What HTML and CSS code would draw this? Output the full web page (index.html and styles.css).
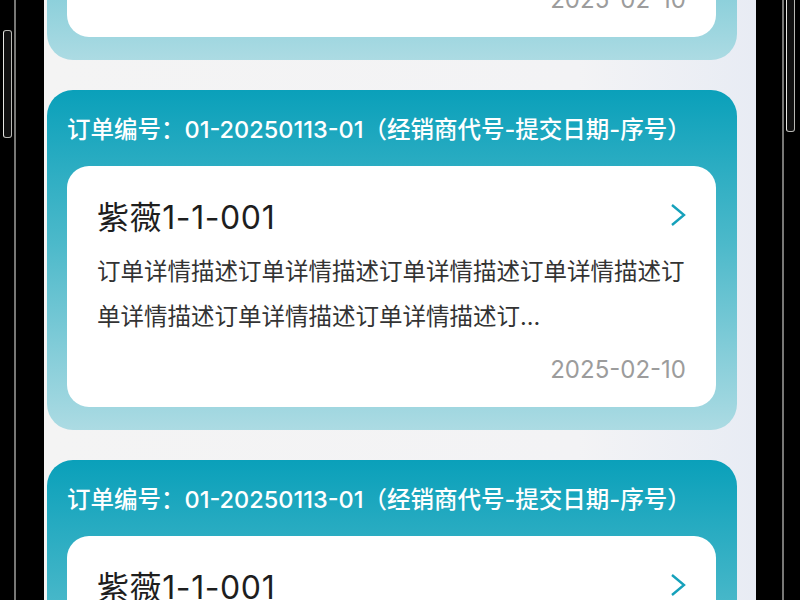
FILE: index.html
```html
<!DOCTYPE html>
<html lang="zh-CN">
<head>
    <meta charset="UTF-8">
    <meta name="viewport" content="width=device-width, initial-scale=1.0">
    <title>订单列表</title>
    <link rel="stylesheet" href="styles.css">
</head>
<body>

    <div class="phone">
        <div class="bezel bezel-left">
            <div class="side-btn"></div>
            <div class="edge-line"></div>
        </div>

        <div class="screen">
            <div class="order-list">
                <div class="order-card">
                    <div class="order-no">订单编号：01-20250113-01（经销商代号-提交日期-序号）</div>
                    <div class="order-body">
                        <div class="order-head">
                            <span class="order-name">紫薇1-1-001</span>
                            <svg class="chevron" viewBox="0 0 16 24"><path d="M2 2 L14 12 L2 22"/></svg>
                        </div>
                        <p class="order-desc">订单详情描述订单详情描述订单详情描述订单详情描述订单详情描述订单详情描述订单详情描述订...</p>
                        <div class="order-date">2025-02-10</div>
                    </div>
                </div>

                <div class="order-card">
                    <div class="order-no">订单编号：01-20250113-01（经销商代号-提交日期-序号）</div>
                    <div class="order-body">
                        <div class="order-head">
                            <span class="order-name">紫薇1-1-001</span>
                            <svg class="chevron" viewBox="0 0 16 24"><path d="M2 2 L14 12 L2 22"/></svg>
                        </div>
                        <p class="order-desc">订单详情描述订单详情描述订单详情描述订单详情描述订单详情描述订单详情描述订单详情描述订...</p>
                        <div class="order-date">2025-02-10</div>
                    </div>
                </div>

                <div class="order-card">
                    <div class="order-no">订单编号：01-20250113-01（经销商代号-提交日期-序号）</div>
                    <div class="order-body">
                        <div class="order-head">
                            <span class="order-name">紫薇1-1-001</span>
                            <svg class="chevron" viewBox="0 0 16 24"><path d="M2 2 L14 12 L2 22"/></svg>
                        </div>
                        <p class="order-desc">订单详情描述订单详情描述订单详情描述订单详情描述订单详情描述订单详情描述订单详情描述订...</p>
                        <div class="order-date">2025-02-10</div>
                    </div>
                </div>
            </div>
        </div>

        <div class="bezel bezel-right">
            <div class="edge-line"></div>
            <div class="side-btn"></div>
        </div>
    </div>

</body>
</html>
```

FILE: styles.css
```css
body {
    margin: 0;
    background: #000;
    font-family: Inter, "Noto Sans CJK SC", sans-serif;
    overflow: hidden;
}
.phone {
    display: flex;
    height: 600px;
}

/* frame */
.bezel {
    width: 44px;
    flex-shrink: 0;
    display: flex;
    background: #000;
}
.edge-line {
    width: 2px;
    background: linear-gradient(to right, #555, #9a9a96, #555);
}
.side-btn {
    box-sizing: border-box;
    border: 1px solid #b8b8b4;
    border-left-color: #e8e8e4;
    border-radius: 3px;
    background: #111;
}
.bezel-left .side-btn {
    width: 9px;
    height: 108px;
    margin: 30px 0 0 3px;
}
.bezel-left .edge-line {
    margin-left: 2px;
}
.bezel-right .edge-line {
    margin-left: 26px;
}
.bezel-right .side-btn {
    width: 9px;
    height: 136px;
    margin: -4px 0 0 2px;
}

/* screen */
.screen {
    flex: 1;
    overflow: hidden;
    background: linear-gradient(to right, #f4f4f4 0%, #f3f3f5 75%, #e8ecf4 100%);
}
.order-list {
    display: flex;
    flex-direction: column;
    gap: 30px;
    margin-top: -280px;
    padding: 0 19px 0 3px;
}
.order-card {
    height: 340px;
    box-sizing: border-box;
    border-radius: 26px;
    padding: 0 21px 0 20px;
    background: linear-gradient(to bottom, #0aa0ba 0%, #4cb9ca 45%, #acdbe3 100%);
}
.order-no {
    height: 76px;
    display: flex;
    align-items: center;
    color: #fff;
    font-size: 23.5px;
    font-weight: 500;
    white-space: nowrap;
}
.order-body {
    background: #fff;
    border-radius: 22px;
    padding: 30px 30px 21px;
}
.order-head {
    display: flex;
    justify-content: space-between;
    align-items: center;
    height: 38px;
}
.order-name {
    font-size: 32px;
    letter-spacing: 0.6px;
    color: #1e1e1e;
}
.chevron {
    width: 16px;
    height: 24px;
    fill: none;
    stroke: #15a1bb;
    stroke-width: 2.4;
}
.order-desc {
    margin: 15px 0 0;
    height: 90px;
    font-size: 23.5px;
    line-height: 45px;
    color: #333;
    overflow: hidden;
}
.order-date {
    margin-top: 15px;
    text-align: right;
    font-size: 24px;
    line-height: 32px;
    color: #9c9c9c;
}
```
